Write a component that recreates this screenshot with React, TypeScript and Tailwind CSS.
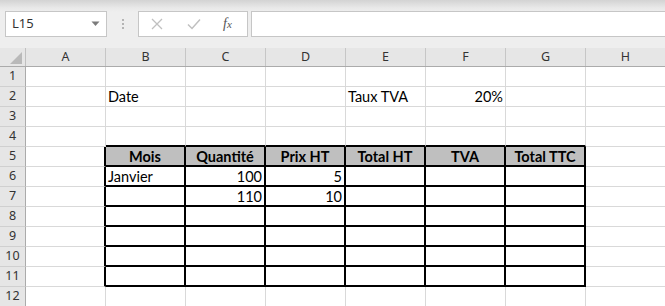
import React from "react";

const cols = ["A", "B", "C", "D", "E", "F", "G", "H"];

type Cell = { text?: string; align?: "left" | "right" | "center"; bold?: boolean };

// data keyed by "row:col"
const data: Record<string, Cell> = {
  "2:B": { text: "Date" },
  "2:E": { text: "Taux TVA" },
  "2:F": { text: "20%", align: "right" },
  "5:B": { text: "Mois", align: "center", bold: true },
  "5:C": { text: "Quantité", align: "center", bold: true },
  "5:D": { text: "Prix HT", align: "center", bold: true },
  "5:E": { text: "Total HT", align: "center", bold: true },
  "5:F": { text: "TVA", align: "center", bold: true },
  "5:G": { text: "Total TTC", align: "center", bold: true },
  "6:B": { text: "Janvier" },
  "6:C": { text: "100", align: "right" },
  "6:D": { text: "5", align: "right" },
  "7:C": { text: "110", align: "right" },
  "7:D": { text: "10", align: "right" },
};

const tableCols = ["B", "C", "D", "E", "F", "G"];
const inTable = (r: number, c: string) => r >= 5 && r <= 11 && tableCols.includes(c);

function GridCell({ row, col }: { row: number; col: string }) {
  const cell = data[`${row}:${col}`];
  const table = inTable(row, col);
  // right edge black if this or the next column is in table
  const nextCol = cols[cols.indexOf(col) + 1];
  const rightBlack = table || (nextCol ? inTable(row, nextCol) : false);
  const bottomBlack = table || inTable(row + 1, col);
  const align =
    cell?.align === "right" ? "justify-end pr-[2px]" : cell?.align === "center" ? "justify-center" : "justify-start pl-[2px]";
  return (
    <div
      className={`w-[80px] shrink-0 h-[20px] flex items-end text-[14.5px] leading-[17px] text-black ${align} ${
        rightBlack ? "border-r-2 border-r-black" : "border-r border-r-[#d9d9d9]"
      } ${bottomBlack ? "border-b-2 border-b-black pb-0" : "border-b border-b-[#d9d9d9] pb-[1px]"} ${
        row === 5 && table ? "bg-[#bfbfbf]" : "bg-white"
      } ${cell?.bold ? "font-bold" : ""}`}
    >
      {cell?.text}
    </div>
  );
}

export default function App() {
  const rows = Array.from({ length: 12 }, (_, i) => i + 1);
  return (
    <div className="w-[665px] h-[306px] overflow-hidden bg-white" style={{ fontFamily: "Lato, 'Noto Sans', sans-serif" }}>
      {/* Formula bar */}
      <div className="h-[48px] flex items-start pt-[11px] pl-[5px] bg-[linear-gradient(to_bottom,#d3d3d3_0px,#e9e9e9_8px,#eeeeee_12px,#eeeeee_100%)]">
        <div className="w-[102px] h-[26px] bg-white border border-[#c6c6c6] flex items-center justify-between pl-[6px] pr-[6px] text-[13px] text-[#333]" style={{ fontFamily: "'Noto Sans', sans-serif" }}>
          <span>L15</span>
          <svg width="9" height="6" viewBox="0 0 9 6">
            <path d="M0.5 0.5 L8.5 0.5 L4.5 5 Z" fill="#7b7b7b" />
          </svg>
        </div>
        <div className="w-[31px] h-[26px] flex flex-col items-center justify-center gap-[2px]">
          <span className="w-[2px] h-[2px] bg-[#b4b4b4]" />
          <span className="w-[2px] h-[2px] bg-[#b4b4b4]" />
          <span className="w-[2px] h-[2px] bg-[#b4b4b4]" />
        </div>
        <div className="w-[110px] h-[26px] bg-white border border-[#c6c6c6] flex items-center pl-[12px]">
          <svg width="12" height="12" viewBox="0 0 12 12" className="mr-[24px]">
            <path d="M1 1 L11 11 M11 1 L1 11" stroke="#c0c0c0" strokeWidth="1.3" />
          </svg>
          <svg width="14" height="12" viewBox="0 0 14 12" className="mr-[22px]">
            <path d="M1 6.5 L5 10.5 L13 1.5" stroke="#c0c0c0" strokeWidth="1.5" fill="none" />
          </svg>
          <span className="text-[14px] italic text-[#555] leading-none" style={{ fontFamily: "'Liberation Serif', serif" }}>
            f<span className="text-[11px]">x</span>
          </span>
        </div>
        <div className="flex-1 h-[26px] ml-[3px] bg-white border border-[#c6c6c6] border-r-0" />
      </div>

      {/* Column headers */}
      <div className="flex h-[19px] bg-[#e6e6e6] border-b border-[#ababab] text-[12.5px] text-[#333]" style={{ fontFamily: "'Noto Sans', sans-serif" }}>
        <div className="w-[26px] shrink-0 border-r border-[#c0c0c0] flex items-end justify-end pr-[3px] pb-[2px]">
          <svg width="12" height="12" viewBox="0 0 12 12">
            <path d="M12 0 L12 12 L0 12 Z" fill="#b9b9b9" />
          </svg>
        </div>
        {cols.map((c) => (
          <div key={c} className="w-[80px] shrink-0 border-r border-[#c6c6c6] flex items-center justify-center leading-none">
            {c}
          </div>
        ))}
      </div>

      {/* Rows */}
      {rows.map((r) => (
        <div key={r} className="flex">
          <div
            className="w-[26px] shrink-0 h-[20px] bg-[#e6e6e6] border-r border-r-[#ababab] border-b border-b-[#d0d0d0] flex items-center justify-center text-[12.5px] text-[#333]"
            style={{ fontFamily: "'Noto Sans', sans-serif" }}
          >
            {r}
          </div>
          {cols.map((c) => (
            <GridCell key={c} row={r} col={c} />
          ))}
        </div>
      ))}
    </div>
  );
}
